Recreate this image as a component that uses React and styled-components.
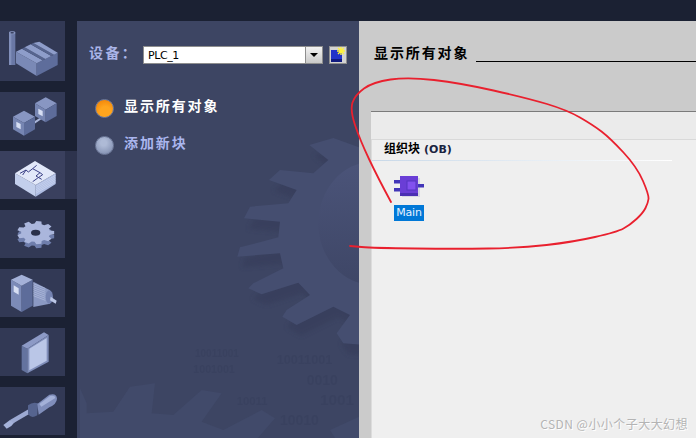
import React from "react";
import styled, { createGlobalStyle } from "styled-components";

const Global = createGlobalStyle`
  html, body { margin: 0; padding: 0; background: #1b2133; }
  #root { width: 696px; height: 438px; }
`;

const cjk = `"Noto Sans CJK SC", "Liberation Sans", sans-serif`;

const Screen = styled.div`
  position: relative;
  width: 696px;
  height: 438px;
  overflow: hidden;
  display: flex;
  flex-direction: column;
  background: #1b2133;
  font-family: ${cjk};
`;
const TopBar = styled.div`
  height: 21px;
  flex: none;
  background: #1b2133;
`;
const Body = styled.div`
  flex: 1;
  display: flex;
  min-height: 0;
`;
const Sidebar = styled.nav`
  width: 77px;
  flex: none;
  display: flex;
  flex-direction: column;
  gap: 11px;
`;
const Tile = styled.div`
  width: ${(p) => (p.$active ? "77px" : "65px")};
  height: ${(p) => p.$h}px;
  flex: none;
  background: ${(p) =>
    p.$active
      ? "linear-gradient(to right, #3a405e 65px, #2d334d 65px)"
      : "#323955"};
  svg { display: block; width: 65px; height: ${(p) => p.$h}px; }
`;
const Panel = styled.section`
  position: relative;
  width: 282px;
  flex: none;
  overflow: hidden;
  background: #3d4563;
  padding: 25px 0 0 12px;
  box-sizing: border-box;
`;
const Backdrop = styled.svg`
  position: absolute;
  left: 0;
  top: 0;
  width: 282px;
  height: 417px;
`;
const DeviceRow = styled.div`
  position: relative;
  display: flex;
  align-items: center;
  height: 18px;
`;
const DeviceLabel = styled.span`
  width: 54px;
  flex: none;
  margin-top: -6px;
  color: #a9b4e8;
  font-size: 14px;
  font-weight: 700;
  letter-spacing: 2.4px;
  white-space: nowrap;
`;
const Select = styled.div`
  width: 180px;
  height: 18px;
  box-sizing: border-box;
  flex: none;
  display: flex;
  border: 1px solid #8e8e8e;
  background: #fff;
`;
const SelectValue = styled.span`
  flex: 1;
  padding-left: 4px;
  font: 11px/17px "DejaVu Sans", sans-serif;
  letter-spacing: -0.4px;
  color: #000;
`;
const SelectArrow = styled.span`
  width: 16px;
  flex: none;
  display: flex;
  align-items: center;
  justify-content: center;
  border-left: 1px solid #8e8e8e;
  background: linear-gradient(#f2f2f2, #c9c9c9);
  &::after {
    content: "";
    border-left: 4px solid transparent;
    border-right: 4px solid transparent;
    border-top: 4px solid #000;
  }
`;
const NewButton = styled.span`
  width: 18px;
  height: 18px;
  margin-left: 6px;
  box-sizing: border-box;
  flex: none;
  border: 1px solid #8e8e8e;
  background: #d3d3d3;
  svg { display: block; width: 16px; height: 16px; }
`;
const Menu = styled.div`
  position: relative;
  margin: 35px 0 0 6px;
  display: flex;
  flex-direction: column;
  gap: 18px;
`;
const MenuItem = styled.div`
  display: flex;
  align-items: center;
  gap: 10px;
  height: 19px;
  color: ${(p) => (p.$active ? "#ffffff" : "#aab5ee")};
  font-size: 14px;
  font-weight: 700;
  letter-spacing: 1.9px;
  white-space: nowrap;
`;
const MenuLabel = styled.span`
  margin-top: -7px;
`;
const Bullet = styled.span`
  width: 19px;
  height: 19px;
  flex: none;
  border-radius: 50%;
  box-sizing: border-box;
  border: 1px solid #6f7a9a;
  background: ${(p) =>
    p.$active
      ? "radial-gradient(circle at 55% 70%, #ffa51e 35%, #f58b0c 75%, #c97a20 100%)"
      : "radial-gradient(circle at 45% 35%, #aebad6 20%, #8f9cbc 65%, #69759a 100%)"};
`;
const Main = styled.main`
  flex: 1;
  min-width: 0;
  display: flex;
  flex-direction: column;
  background: #cbcbcb;
`;
const TitleRow = styled.div`
  display: flex;
  align-items: flex-end;
  gap: 7px;
  height: 19px;
  margin-top: 22px;
  padding-left: 15px;
`;
const Title = styled.h1`
  margin: 0;
  font-size: 14px;
  line-height: 19px;
  font-weight: 700;
  letter-spacing: 1.9px;
  color: #000;
  white-space: nowrap;
`;
const TitleRule = styled.span`
  flex: 1;
  height: 1px;
  background: #000;
`;
const Content = styled.div`
  flex: 1;
  margin: 49px 0 0 12px;
  border-top: 1px solid #7b7b7b;
  background: #efefef;
  display: flex;
  flex-direction: column;
`;
const ContentHead = styled.div`
  height: 27px;
  flex: none;
  background: #ebebeb;
  border-bottom: 1px solid #d9d9d9;
`;
const Group = styled.div`
  flex: 1;
  border-left: 1px solid #dcdcdc;
`;
const GroupTitle = styled.div`
  width: 300px;
  height: 21px;
  box-sizing: border-box;
  padding-left: 12px;
  line-height: 16px;
  font-size: 12px;
  font-weight: 700;
  color: #000;
  position: relative;
  &::after {
    content: "";
    position: absolute;
    left: 0;
    right: 0;
    bottom: 0;
    height: 1px;
    background: linear-gradient(to right, #c8d8e8, #ffffff);
  }
`;
const GroupLatin = styled.span`
  font: 700 11px "DejaVu Sans", sans-serif;
  color: #1a2440;
  margin-left: 4px;
`;
const Block = styled.div`
  margin: 15px 0 0 22px;
  width: 30px;
  display: flex;
  flex-direction: column;
  gap: 8px;
`;
const BlockIcon = styled.svg`
  display: block;
  width: 31px;
  height: 21px;
`;
const BlockLabel = styled.span`
  height: 16px;
  background: #0078d7;
  color: #e6f2ff;
  font: 11px/15px "DejaVu Sans", sans-serif;
  letter-spacing: -0.2px;
  text-align: center;
`;
const Annotation = styled.svg`
  position: absolute;
  left: 0;
  top: 0;
  width: 696px;
  height: 438px;
  pointer-events: none;
`;
const Watermark = styled.span`
  position: absolute;
  right: 8px;
  bottom: 7px;
  font-size: 12px;
  line-height: 14px;
  letter-spacing: 0.45px;
  color: #b4b4b4;
  text-shadow: 1px 1px 0 #ffffff;
  white-space: nowrap;
`;

const smooth = (pts) => {
  let d = `M${pts[0][0]} ${pts[0][1]}`;
  for (let i = 1; i < pts.length - 1; i++) {
    const mx = (pts[i][0] + pts[i + 1][0]) / 2;
    const my = (pts[i][1] + pts[i + 1][1]) / 2;
    d += ` Q${pts[i][0]} ${pts[i][1]} ${mx} ${my}`;
  }
  const l = pts[pts.length - 1];
  return d + ` L${l[0]} ${l[1]}`;
};

const redPts = [
  [391, 202], [378, 178], [360, 140], [350, 110], [355, 95], [373, 82], [408, 77],
  [460, 83], [527, 98], [567, 110], [593, 125], [610, 138], [637, 167], [649, 195],
  [648, 203], [643, 213], [630, 225], [617, 232], [573, 242], [520, 248], [457, 249],
  [373, 248], [350, 246],
];

const gearPoly = (cx, cy, rx, ry, teeth) => {
  const out = [];
  const step = (Math.PI * 2) / teeth;
  for (let i = 0; i < teeth; i++) {
    const a = i * step;
    [[-0.36, 0.78], [-0.2, 1], [0.2, 1], [0.36, 0.78]].forEach(([o, r]) => {
      const t = a + o * step;
      out.push(`${(cx + Math.cos(t) * rx * r).toFixed(1)},${(cy + Math.sin(t) * ry * r).toFixed(1)}`);
    });
  }
  return out.join(" ");
};

const FactoryIcon = () => (
  <svg viewBox="0 63 195 180">
    <rect x="27" y="97" width="19" height="98" fill="#6a78a5" />
    <rect x="27" y="97" width="7" height="98" fill="#8290bb" />
    <ellipse cx="36.5" cy="98" rx="9.5" ry="5" fill="#8593bd" />
    <ellipse cx="36.5" cy="98" rx="5" ry="2.5" fill="#3b4363" />
    <polygon points="48,155 110,190 110,228 48,190" fill="#7a89b6" />
    <polygon points="110,190 173,158 173,195 110,228" fill="#5e6d9b" />
    <polygon points="48,155 66,146 128,181 110,190" fill="#8e9dca" />
    <polygon points="66,146 74,142 136,177 128,181" fill="#56648f" />
    <polygon points="74,142 92,133 154,168 136,177" fill="#8e9dca" />
    <polygon points="92,133 100,129 162,164 154,168" fill="#56648f" />
    <polygon points="100,129 118,125 173,158 162,164" fill="#8e9dca" />
  </svg>
);

const CubesIcon = () => (
  <svg viewBox="0 276 195 144">
    <polygon points="100,366 125,350 128,355 103,372" fill="#aab6da" />
    <polygon points="72,332 105,350 72,369 39,350" fill="#8896c2" />
    <polygon points="39,350 72,369 72,407 39,388" fill="#7685b2" />
    <polygon points="72,369 105,350 105,388 72,407" fill="#5d6c9a" />
    <polygon points="49,365 62,372 62,388 49,381" fill="#d6def3" />
    <polygon points="137,292 170,310 137,329 105,310" fill="#8896c2" />
    <polygon points="105,310 137,329 137,367 105,348" fill="#7685b2" />
    <polygon points="137,329 170,310 170,348 137,367" fill="#5d6c9a" />
    <polygon points="115,326 128,333 128,349 115,342" fill="#d6def3" />
  </svg>
);

const BlockStackIcon = () => (
  <svg viewBox="0 453 195 144">
    <polygon points="45,520 107,555 107,590 45,552" fill="#c3cfec" />
    <polygon points="107,555 167,520 167,552 107,590" fill="#aebce2" />
    {[560, 565, 570, 575, 580].map((y) => (
      <line key={y} x1="107" y1={y} x2="167" y2={y - 34} stroke="#dbe3f7" strokeWidth="1.5" />
    ))}
    <polygon points="45,520 105,483 167,520 107,555" fill="#e2e8f9" />
    <path
      d="M60 520 L78 510 L85 516 L98 506 L120 518 L128 524 L112 535 L98 545 M78 510 L68 525 M98 506 L110 496 M120 518 L108 528 L125 538"
      fill="none"
      stroke="#3a3f85"
      strokeWidth="3"
    />
  </svg>
);

const GearIcon = () => (
  <svg viewBox="0 -30 195 144">
    <polygon points={gearPoly(107, 50, 56, 35, 9)} fill="#6f7eac" />
    <polygon points={gearPoly(107, 38, 56, 35, 9)} fill="#aab6dc" />
    <ellipse cx="107" cy="38" rx="14" ry="9" fill="#2a3049" />
  </svg>
);

const DriveIcon = () => (
  <svg viewBox="0 148 195 144">
    <polygon points="100,186 150,212 150,252 100,262" fill="#8b99c3" />
    {[192, 198, 204, 210, 216, 222, 228].map((y) => (
      <line key={y} x1="100" y1={y} x2="136" y2={y + 14} stroke="#c2cce8" strokeWidth="1.5" />
    ))}
    <ellipse cx="148" cy="232" rx="11" ry="20" fill="#7482b0" />
    <polygon points="152,231 170,243 167,252 150,242" fill="#bcc7e6" />
    <polygon points="33,180 65,198 65,277 33,258" fill="#7c8bb8" />
    <polygon points="65,198 98,180 98,258 65,277" fill="#5d6c9a" />
    <polygon points="33,180 65,165 98,180 65,198" fill="#a4b1d8" />
    <polygon points="41,197 56,206 56,225 41,216" fill="#d6def3" />
  </svg>
);

const FrameIcon = () => (
  <svg viewBox="0 324 195 144">
    <polygon points="65,377 82,386 82,460 65,450" fill="#64739f" />
    <polygon points="65,377 132,337 146,345 82,386" fill="#8d9ac6" />
    <polygon points="82,386 146,345 146,425 82,460" fill="#7f8db9" />
    <polygon points="88,386 140,354 140,422 88,451" fill="#bac6e7" />
  </svg>
);

const DriverIcon = () => (
  <svg viewBox="0 501 195 144">
    <polygon points="10,615 30,600 44,606 34,618 20,626" fill="#a5b2da" />
    <polygon points="30,600 88,566 94,578 40,610" fill="#9ca9d2" />
    <path d="M84 556 Q98 544 114 550 L112 586 Q92 598 84 580 Z" fill="#56648f" />
    <path d="M112 552 L148 524 Q170 518 171 536 Q170 552 148 562 L116 584 Z" fill="#7f8dba" />
    <path d="M118 552 L150 528 Q165 526 166 534 L124 560 Z" fill="#a4b1d8" />
  </svg>
);

const GEAR = "745,0 700,40 600,30 567,60 650,90 625,130 510,140 492,175 600,185 595,232 480,262 472,290 600,280 610,325 520,370 505,385 545,403 655,368 690,405 620,450 607,470 650,495 760,440 810,465 770,520 790,550 860,555 860,-30 760,-66 688,-45";
const LOWER = "0,685 20,730 20,760 100,755 150,680 225,670 215,760 280,765 365,690 425,700 365,785 430,810 545,750 585,775 520,850 0,850";

const digits = [
  [345, 590, 30, "10011001"], [340, 640, 32, "1001001"], [680, 675, 42, "0010"],
  [720, 735, 46, "1001"], [470, 735, 34, "10011"], [600, 795, 42, "10010"], [590, 612, 38, "10011001"],
];

export default function App() {
  return (
    <Screen>
      <Global />
      <TopBar />
      <Body>
        <Sidebar>
          <Tile $h={60}><FactoryIcon /></Tile>
          <Tile $h={48}><CubesIcon /></Tile>
          <Tile $h={48} $active><BlockStackIcon /></Tile>
          <Tile $h={48}><GearIcon /></Tile>
          <Tile $h={48}><DriveIcon /></Tile>
          <Tile $h={48}><FrameIcon /></Tile>
          <Tile $h={48}><DriverIcon /></Tile>
        </Sidebar>
        <Panel>
          <Backdrop viewBox="0 0 282 417" aria-hidden="true">
            <defs>
              <linearGradient id="hub" x1="0" y1="0" x2="0" y2="1">
                <stop offset="0" stopColor="#4b5479" />
                <stop offset="1" stopColor="#3e4666" />
              </linearGradient>
              <filter id="soft"><feGaussianBlur stdDeviation="6" /></filter>
            </defs>
            <g transform="translate(3 139) scale(0.3333)">
              <polygon points={GEAR} fill="#343b58" opacity="0.5" transform="translate(14 32)" filter="url(#soft)" />
              <polygon points={GEAR} fill="#454e70" />
              <ellipse cx="880" cy="190" rx="165" ry="185" fill="url(#hub)" />
              <polygon points={LOWER} fill="#414a6a" />
              <polygon points="750,810 837,770 860,770 860,850 775,850" fill="#414a6a" />
              {digits.map(([x, y, s, t]) => (
                <text key={`${x}-${y}`} x={x} y={y} fontSize={s} fontWeight="700" fontFamily="Liberation Sans, sans-serif" fill="#363e5b" opacity="0.45">{t}</text>
              ))}
            </g>
          </Backdrop>
          <DeviceRow>
            <DeviceLabel>设备：</DeviceLabel>
            <Select>
              <SelectValue>PLC_1</SelectValue>
              <SelectArrow />
            </Select>
            <NewButton>
              <svg viewBox="0 0 16 16">
                <rect x="1" y="3" width="11" height="12" fill="#2233c8" />
                <rect x="1" y="12" width="11" height="3" fill="#101a80" />
                <path d="M11 0 L11 8 M7 4 L15 4 M8 1 L14 7 M14 1 L8 7" stroke="#fff23a" strokeWidth="1.4" />
              </svg>
            </NewButton>
          </DeviceRow>
          <Menu>
            <MenuItem $active><Bullet $active /><MenuLabel>显示所有对象</MenuLabel></MenuItem>
            <MenuItem><Bullet /><MenuLabel>添加新块</MenuLabel></MenuItem>
          </Menu>
        </Panel>
        <Main>
          <TitleRow>
            <Title>显示所有对象</Title>
            <TitleRule />
          </TitleRow>
          <Content>
            <ContentHead />
            <Group>
              <GroupTitle>组织块<GroupLatin>(OB)</GroupLatin></GroupTitle>
              <Block>
                <BlockIcon viewBox="0 0 31 21">
                  <rect x="8" y="2" width="18" height="19" fill="#d6d6e2" />
                  <rect x="0" y="4" width="6" height="3.5" fill="#4236b8" />
                  <rect x="0" y="12" width="6" height="3.5" fill="#4236b8" />
                  <rect x="24" y="8" width="6" height="3.5" fill="#4236b8" />
                  <rect x="6" y="0" width="18" height="20" fill="#6a3ed6" />
                  <rect x="6" y="17" width="18" height="3" fill="#4a2fb2" />
                  <rect x="13" y="5" width="9" height="9" fill="#8250ee" stroke="#5534c0" />
                </BlockIcon>
                <BlockLabel>Main</BlockLabel>
              </Block>
            </Group>
          </Content>
        </Main>
      </Body>
      <Annotation viewBox="0 0 696 438" aria-hidden="true">
        <path d={smooth(redPts)} fill="none" stroke="#e9202e" strokeWidth="1.8" strokeLinecap="round" />
      </Annotation>
      <Watermark>CSDN @小小个子大大幻想</Watermark>
    </Screen>
  );
}
